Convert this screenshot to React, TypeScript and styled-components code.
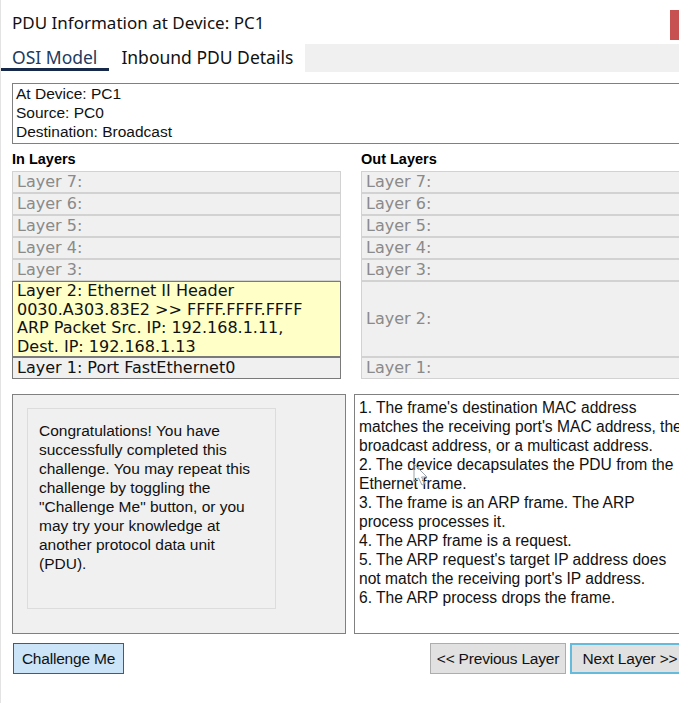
import styled, { createGlobalStyle } from "styled-components";

const GlobalStyle = createGlobalStyle`
  html, body {
    margin: 0;
    padding: 0;
    background: #ffffff;
    overflow: hidden;
  }
  body {
    width: 679px;
    height: 703px;
  }
`;

const Window = styled.div`
  position: relative;
  width: 700px;
  height: 703px;
  box-sizing: border-box;
  border-left: 1px solid #e3e3e3;
  background: #ffffff;
`;

const TitleBar = styled.div`
  display: flex;
  align-items: center;
  justify-content: space-between;
  height: 44px;
  padding-left: 11px;
`;

const Title = styled.h1`
  margin: 0;
  font-family: "Noto Sans", "Open Sans", sans-serif;
  font-weight: 400;
  font-size: 17px;
  color: #111;
`;

const CloseButton = styled.div`
  width: 30px;
  height: 30px;
  margin-top: 6px;
  background: #c75050;
`;

const TabRow = styled.div`
  display: flex;
  align-items: flex-start;
  height: 28px;
`;

const Tab = styled.div<{ $active?: boolean }>`
  box-sizing: border-box;
  height: 27px;
  padding: 2px 12px 0 ${(p) => (p.$active ? "11px" : "12px")};
  display: flex;
  align-items: center;
  font-family: "Noto Sans", "Open Sans", sans-serif;
  font-size: 17.5px;
  white-space: nowrap;
  color: ${(p) => (p.$active ? "#1d3a60" : "#111")};
  border-bottom: 3px solid ${(p) => (p.$active ? "#16294a" : "transparent")};
`;

const TabFiller = styled.div`
  flex: 1;
  height: 28px;
  background: #f0f0f0;
`;

const Content = styled.div`
  padding-left: 11px;
`;

const InfoBox = styled.div`
  margin-top: 11px;
  height: 61px;
  box-sizing: border-box;
  border: 1px solid #808080;
  border-right: none;
  padding: 0 3px;
  font-family: "Liberation Sans", Arial, sans-serif;
  font-size: 15.5px;
  line-height: 19px;
  color: #111;
`;

const LayersGrid = styled.div`
  display: grid;
  grid-template-columns: 329px 1fr;
  column-gap: 20px;
  margin-top: 6px;
`;

const ColumnHeader = styled.div`
  font-family: "Liberation Sans", Arial, sans-serif;
  font-weight: 700;
  font-size: 14.5px;
  line-height: 18px;
  margin-bottom: 3px;
  color: #000;
`;

const LayerCell = styled.div<{ $state: "idle" | "active" | "current" }>`
  box-sizing: border-box;
  display: flex;
  flex-direction: column;
  justify-content: center;
  min-height: 22px;
  padding: 0 4px;
  font-family: "DejaVu Sans", Verdana, sans-serif;
  font-size: 16px;
  line-height: 18.5px;
  white-space: nowrap;
  overflow: hidden;
  color: ${(p) => (p.$state === "idle" ? "#8a8a8a" : "#111")};
  background: ${(p) => (p.$state === "current" ? "#ffffc8" : "#f0f0f0")};
  border: 1px solid ${(p) => (p.$state === "idle" ? "#d2d2d2" : "#7a7a7a")};
`;

const Panels = styled.div`
  display: flex;
  gap: 8px;
  margin-top: 15px;
  height: 240px;
`;

const ResultPanel = styled.div`
  box-sizing: border-box;
  width: 334px;
  border: 1px solid #808080;
  background: #f0f0f0;
  padding: 13px 14px;
`;

const ResultMessage = styled.div`
  box-sizing: border-box;
  width: 249px;
  height: 201px;
  border: 1px solid #dcdcdc;
  padding: 12px 11px;
  font-family: "Liberation Sans", Arial, sans-serif;
  font-size: 15.5px;
  line-height: 19px;
  color: #111;
`;

const StepsPanel = styled.div`
  box-sizing: border-box;
  flex: 1;
  border: 1px solid #808080;
  border-right: none;
  background: #ffffff;
  padding: 3px 4px;
  font-family: "Liberation Sans", Arial, sans-serif;
  font-size: 15.6px;
  line-height: 19px;
  color: #111;
  white-space: nowrap;
`;

const ButtonRow = styled.div`
  display: flex;
  align-items: center;
  margin-top: 9px;
  padding-left: 1px;
`;

const Button = styled.div<{ $variant: "primary" | "plain" | "focused" }>`
  box-sizing: border-box;
  height: 31px;
  display: flex;
  align-items: center;
  justify-content: center;
  overflow: hidden;
  white-space: nowrap;
  font-family: "Liberation Sans", Arial, sans-serif;
  font-size: 15.5px;
  letter-spacing: -0.2px;
  color: #111;
  background: ${(p) => (p.$variant === "primary" ? "#cce4f7" : "#e1e1e1")};
  border: ${(p) =>
    p.$variant === "primary"
      ? "1px solid #2c628b"
      : p.$variant === "focused"
        ? "2px solid #64bbdc"
        : "1px solid #adadad"};
`;

const Spacer = styled.div`
  flex: 1;
`;

const Cursor = styled.svg`
  position: absolute;
  left: 412px;
  top: 463px;
`;

const layers = [7, 6, 5, 4, 3, 2, 1];

const inLayers: Record<number, { state: "idle" | "active" | "current"; lines: string[] }> = {
  2: {
    state: "current",
    lines: [
      "Layer 2: Ethernet II Header",
      "0030.A303.83E2 >> FFFF.FFFF.FFFF",
      "ARP Packet Src. IP: 192.168.1.11,",
      "Dest. IP: 192.168.1.13",
    ],
  },
  1: { state: "active", lines: ["Layer 1: Port FastEthernet0"] },
};

const steps = [
  "1. The frame's destination MAC address",
  "matches the receiving port's MAC address, the",
  "broadcast address, or a multicast address.",
  "2. The device decapsulates the PDU from the",
  "Ethernet frame.",
  "3. The frame is an ARP frame. The ARP",
  "process processes it.",
  "4. The ARP frame is a request.",
  "5. The ARP request's target IP address does",
  "not match the receiving port's IP address.",
  "6. The ARP process drops the frame.",
];

function App() {
  return (
    <>
      <GlobalStyle />
      <Window>
        <TitleBar>
          <Title>PDU Information at Device: PC1</Title>
          <CloseButton />
        </TitleBar>
        <TabRow>
          <Tab $active>OSI Model</Tab>
          <Tab>Inbound PDU Details</Tab>
          <TabFiller />
        </TabRow>
        <Content>
          <InfoBox>
            <div>At Device: PC1</div>
            <div>Source: PC0</div>
            <div>Destination: Broadcast</div>
          </InfoBox>
          <LayersGrid>
            <ColumnHeader>In Layers</ColumnHeader>
            <ColumnHeader>Out Layers</ColumnHeader>
            {layers.map((n) => {
              const info = inLayers[n];
              return [
                <LayerCell key={`in-${n}`} $state={info ? info.state : "idle"}>
                  {info ? info.lines.map((l) => <div key={l}>{l}</div>) : `Layer ${n}:`}
                </LayerCell>,
                <LayerCell key={`out-${n}`} $state="idle">
                  Layer {n}:
                </LayerCell>,
              ];
            })}
          </LayersGrid>
          <Panels>
            <ResultPanel>
              <ResultMessage>
                Congratulations! You have successfully completed this challenge. You may repeat
                this challenge by toggling the "Challenge Me" button, or you may try your knowledge
                at another protocol data unit (PDU).
              </ResultMessage>
            </ResultPanel>
            <StepsPanel>
              {steps.map((s) => (
                <div key={s}>{s}</div>
              ))}
            </StepsPanel>
          </Panels>
          <ButtonRow>
            <Button $variant="primary" style={{ width: 111 }}>
              Challenge Me
            </Button>
            <Spacer />
            <Button $variant="plain" style={{ width: 136, marginRight: 4 }}>
              &lt;&lt; Previous Layer
            </Button>
            <Button $variant="focused" style={{ width: 120, marginRight: 10 }}>
              Next Layer &gt;&gt;
            </Button>
          </ButtonRow>
        </Content>
        <Cursor width="18" height="24" viewBox="0 0 18 24">
          <path d="M1 1 L1 19 L5.5 15 L9 22 L12 20.5 L8.5 14 L14 14 Z" fill="none" stroke="#9aa4ad" strokeWidth="1" />
        </Cursor>
      </Window>
    </>
  );
}

export default App;
